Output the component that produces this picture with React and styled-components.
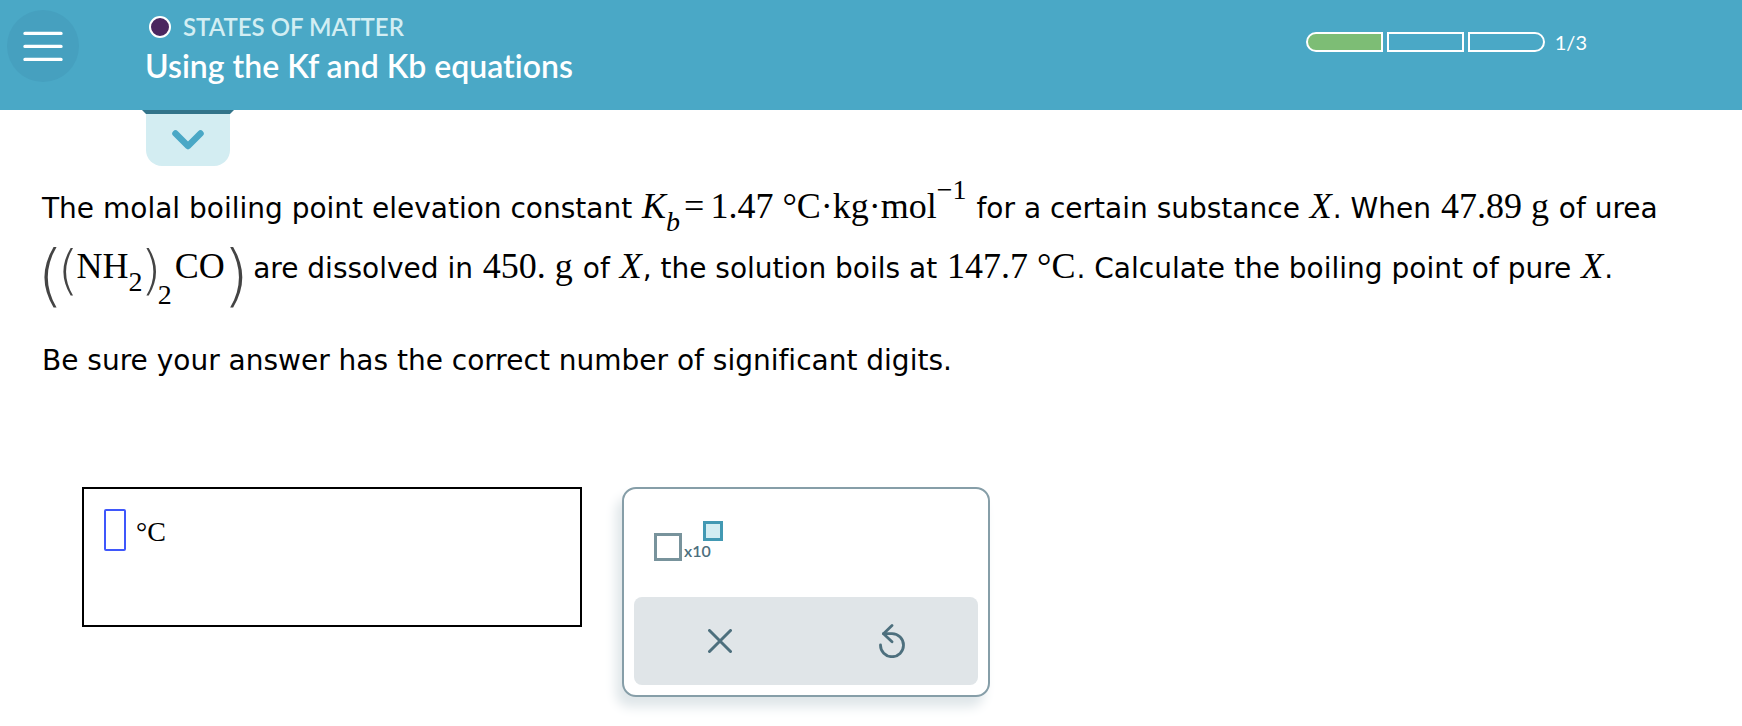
import React, { useState } from 'react'
import styled, { createGlobalStyle } from 'styled-components'

const steps = [1, 2, 3]

const App = () => {
  const [answer, setAnswer] = useState("")
  const [currentStep] = useState(1)

  const handleChange = (event) => {
    setAnswer(event.target.value)
  }
  const handleExponent = () => {
    setAnswer(answer + "e")
  }
  const handleClear = () => {
    setAnswer("")
  }

  return <>
    <GlobalStyle />
    <Header>
      <MenuButton type="button" aria-label="Menu">
        <svg width="40" height="30" viewBox="0 0 40 30" fill="none" stroke="#fff" strokeWidth="3.4" strokeLinecap="round">
          <path d="M2 2.4h36M2 15.4h36M2 28.4h36" />
        </svg>
      </MenuButton>
      <Titles>
        <Topic><Dot />STATES OF MATTER</Topic>
        <Title>Using the Kf and Kb equations</Title>
      </Titles>
      <Progress>
        <Steps>
          {steps.map((step) => <Step key={step} $done={step <= currentStep} />)}
        </Steps>
        <Count>{currentStep}/{steps.length}</Count>
      </Progress>
    </Header>
    <main>
      <TabRow>
        <TabFold />
        <Tab type="button" aria-label="Expand">
          <svg width="32" height="20" viewBox="0 0 32 20" fill="none" stroke="#4aa8c6" strokeWidth="6.5" strokeLinecap="round" strokeLinejoin="round">
            <path d="M3.5 3.5L16 16L28.5 3.5" />
          </svg>
        </Tab>
      </TabRow>
      <Question>
        <Text>
          The molal boiling point elevation constant{' '}
          <Formula><i>K</i><Sub><i>b</i></Sub><Equals>=</Equals>1.47 °C·kg·mol<Sup>−1</Sup></Formula>
          {' '}for a certain substance <Formula><i>X</i></Formula>. When <Formula>47.89 g</Formula> of urea{' '}
          <Formula>
            <OuterOpen>(</OuterOpen><InnerOpen>(</InnerOpen>NH<Sub>2</Sub><InnerClose>)</InnerClose><LowSub>2</LowSub>CO<OuterClose>)</OuterClose>
          </Formula>
          {' '}are dissolved in <Formula>450. g</Formula> of <Formula><i>X</i></Formula>, the solution boils
          at <Formula>147.7 °C</Formula>. Calculate the boiling point of pure <Formula><i>X</i></Formula>.
        </Text>
        <Text>Be sure your answer has the correct number of significant digits.</Text>
      </Question>
      <Workspace>
        <AnswerBox>
          <AnswerInput id="answer" value={answer} onChange={handleChange} />
          <Unit htmlFor="answer">°C</Unit>
        </AnswerBox>
        <Palette>
          <Tools>
            <ExponentButton type="button" onClick={handleExponent}>
              <BaseSquare />
              x10
              <PowerSquare />
            </ExponentButton>
          </Tools>
          <Actions>
            <ActionButton type="button" aria-label="Clear" onClick={handleClear}>
              <svg width="24" height="24" viewBox="0 0 24 24" fill="none" stroke="#4d6f7d" strokeWidth="3" strokeLinecap="round">
                <path d="M1.5 1.5L22.5 22.5M22.5 1.5L1.5 22.5" />
              </svg>
            </ActionButton>
            <ActionButton type="button" aria-label="Undo" onClick={handleClear}>
              <svg width="26" height="34" viewBox="0 0 26 34" fill="none" stroke="#4d6f7d" strokeWidth="2.8" strokeLinecap="round" strokeLinejoin="round">
                <path d="M13 1.5L4.5 9.7L13 17.8" />
                <path d="M4.5 9.7H13A11.5 11.5 0 1 1 1.5 21" />
              </svg>
            </ActionButton>
          </Actions>
        </Palette>
      </Workspace>
    </main>
  </>
}

const GlobalStyle = createGlobalStyle`
  * {
    box-sizing: border-box;
  }
  body {
    margin: 0;
    background: #fff;
    color: #000;
    font-family: 'DejaVu Sans', Verdana, sans-serif;
    font-variant-ligatures: none;
  }
  button, input {
    margin: 0;
    padding: 0;
    border: none;
    background: none;
    font: inherit;
  }
  button {
    cursor: pointer;
  }
  svg {
    display: block;
  }
`

const Header = styled.header`
  display: flex;
  align-items: flex-start;
  min-height: 110px;
  padding: 10px 155px 0 7px;
  background: #4aa8c6;
  color: #fff;
  font-family: Lato, sans-serif;
`
const MenuButton = styled.button`
  display: flex;
  align-items: center;
  justify-content: center;
  width: 72px;
  height: 72px;
  border-radius: 50%;
  background: #46a0bf;
`
const Titles = styled.div`
  flex: 1;
  margin-left: 66px;
`
const Topic = styled.div`
  display: flex;
  align-items: center;
  gap: 12px;
  padding-left: 4px;
  font-size: 24px;
  line-height: 34px;
  font-weight: 600;
  color: #d3eef3;
`
const Dot = styled.span`
  width: 22px;
  height: 22px;
  border: 2px solid #fff;
  border-radius: 50%;
  background: #4b275f;
`
const Title = styled.h1`
  margin: 0;
  font-size: 32px;
  line-height: 44px;
  font-weight: 600;
`
const Progress = styled.div`
  display: flex;
  align-items: center;
  gap: 10px;
  margin-top: 18px;
`
const Steps = styled.div`
  display: flex;
  gap: 4px;
`
const Step = styled.span`
  width: 77px;
  height: 20px;
  border: 2px solid #fff;
  background: ${(props) => (props.$done ? '#7dbd75' : 'transparent')};
  &:first-child {
    border-radius: 10px 0 0 10px;
  }
  &:last-child {
    border-radius: 0 10px 10px 0;
  }
`
const Count = styled.span`
  font-size: 20px;
  line-height: 28px;
`

const TabRow = styled.div`
  display: flex;
  flex-direction: column;
  align-items: center;
  width: 92px;
  margin-left: 142px;
`
const TabFold = styled.div`
  align-self: stretch;
  height: 4px;
  background: #32748a;
  clip-path: polygon(0 0, 100% 0, 88px 100%, 4px 100%);
`
const Tab = styled.button`
  display: flex;
  align-items: center;
  justify-content: center;
  width: 84px;
  height: 52px;
  border-radius: 0 0 16px 16px;
  background: #d3edf2;
`

const Question = styled.section`
  padding: 13px 60px 0 42px;
`
const Text = styled.p`
  margin: 0 0 32px;
  font-size: 28px;
  line-height: 60px;
`
const Formula = styled.span`
  margin: 0 1px;
  font-family: 'Liberation Serif', 'Times New Roman', serif;
  font-size: 36px;
  line-height: 0;
  white-space: nowrap;
`
const Sub = styled.sub`
  font-size: 28px;
  line-height: 0;
  vertical-align: -13px;
`
const LowSub = styled(Sub)`
  margin-right: 3px;
  vertical-align: -26px;
`
const Sup = styled.sup`
  font-size: 28px;
  line-height: 0;
  vertical-align: 19px;
`
const Equals = styled.span`
  margin: 0 6px 0 4px;
`
const InnerParen = styled.span`
  color: #444;
  font-family: 'DejaVu Sans Light', 'DejaVu Sans', sans-serif;
  font-weight: 200;
  font-size: 54px;
  line-height: 0;
  vertical-align: -11px;
`
const InnerOpen = styled(InnerParen)`
  margin: 0 -2px 0 -4px;
`
const InnerClose = styled(InnerParen)`
  margin: 0 -4px 0 -2px;
`
const OuterParen = styled(InnerParen)`
  font-size: 68px;
  vertical-align: -21px;
`
const OuterOpen = styled(OuterParen)`
  margin: 0 -2px 0 -6px;
`
const OuterClose = styled(OuterParen)`
  margin: 0 -6px 0 -2px;
`

const Workspace = styled.section`
  display: flex;
  align-items: flex-start;
  gap: 40px;
  padding: 64px 82px 28px;
`
const AnswerBox = styled.div`
  display: flex;
  align-items: flex-start;
  gap: 10px;
  width: 500px;
  min-height: 140px;
  padding: 20px;
  border: 2px solid #000;
`
const AnswerInput = styled.input`
  width: 22px;
  height: 42px;
  border: 2px solid #3f57fb;
  border-radius: 2px;
  outline: none;
`
const Unit = styled.label`
  font-family: 'Liberation Serif', 'Times New Roman', serif;
  font-size: 28px;
  line-height: 46px;
`
const Palette = styled.div`
  width: 368px;
  padding: 10px;
  border: 2px solid #869ea8;
  border-radius: 14px;
  background: #fff;
  box-shadow: -6px 10px 12px #dfe6e9;
`
const Tools = styled.div`
  padding: 22px 20px 36px;
`
const ExponentButton = styled.button`
  display: flex;
  align-items: flex-end;
  gap: 2px;
  height: 40px;
  color: #4d6f7d;
  font-family: Lato, sans-serif;
  font-size: 16px;
  line-height: 20px;
  font-weight: 600;
`
const BaseSquare = styled.span`
  width: 28px;
  height: 28px;
  border: 3px solid #78939c;
`
const PowerSquare = styled.span`
  align-self: flex-start;
  width: 20px;
  height: 20px;
  margin-left: -10px;
  border: 3px solid #4299b3;
  background: #d3edf2;
`
const Actions = styled.div`
  display: grid;
  grid-template-columns: 1fr 1fr;
  border-radius: 8px;
  background: #e0e5e8;
`
const ActionButton = styled.button`
  display: flex;
  align-items: center;
  justify-content: center;
  height: 88px;
`

export default App
